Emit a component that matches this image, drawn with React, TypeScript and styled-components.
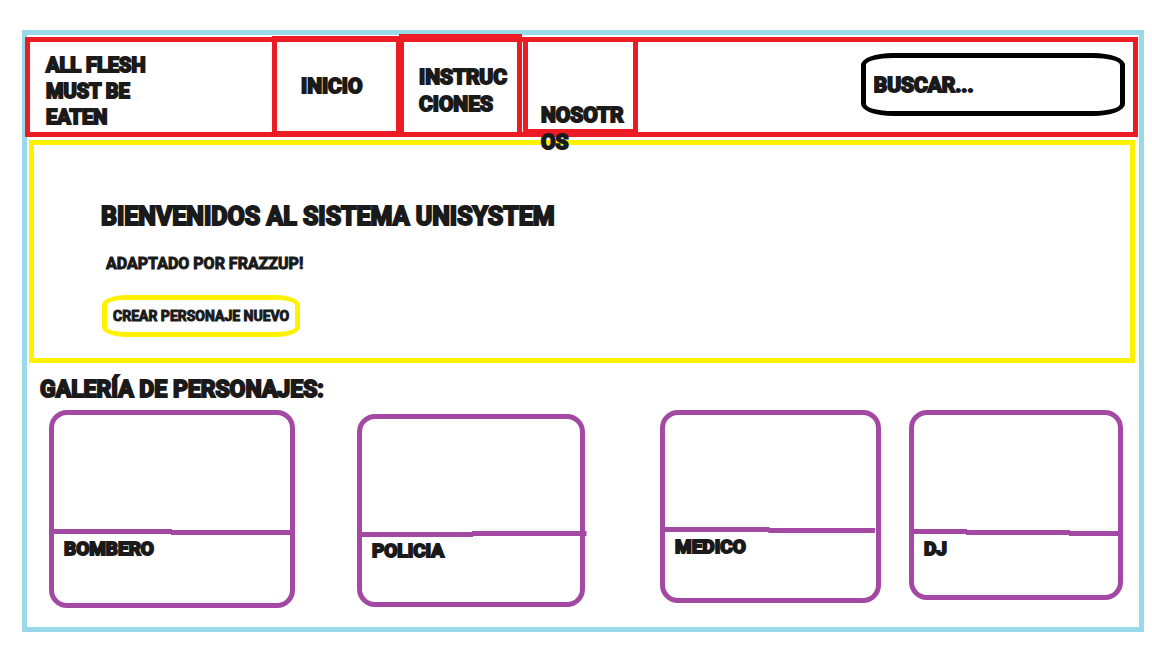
import React from "react";
import styled, { createGlobalStyle } from "styled-components";

const GlobalStyle = createGlobalStyle`
  *, *::before, *::after { box-sizing: border-box; }
  body {
    margin: 0;
    background: #fff;
    color: #1a1a1a;
    font-family: "Roboto", sans-serif;
    font-weight: 700;
    text-transform: uppercase;
    -webkit-text-stroke: 1px #1a1a1a;
  }
`;

const Frame = styled.div`
  margin: 30px 8px 16px 22px;
  border: 5px solid #99d9ea;
  padding: 2px 0 19px;
`;

const Header = styled.header`
  position: relative;
  z-index: 1;
  display: grid;
  grid-template-rows: minmax(0, 1fr);
  grid-template-columns:
    minmax(0, 242fr) minmax(0, 127fr) minmax(0, 124fr) minmax(0, 115fr)
    minmax(0, 495fr);
  height: 100px;
  margin: 0 1px 0 -2px;
  border: 5px solid #ed1c24;
  font-size: 21px;
  -webkit-text-stroke-width: 2px;
`;

const Brand = styled.a`
  padding: 10px 0 0 16px;
  font-size: 20px;
  line-height: 26px;
  color: inherit;
  text-decoration: none;
`;

const NavCell = styled.a<{ $margin: string; $padding: string }>`
  margin: ${(p) => p.$margin};
  padding: ${(p) => p.$padding};
  border: 5px solid #ed1c24;
  line-height: 27px;
  white-space: nowrap;
  color: inherit;
  text-decoration: none;
`;

const SearchForm = styled.form`
  padding: 11px 8px 0 45%;
`;

const SearchInput = styled.input`
  display: block;
  width: 100%;
  height: 63px;
  padding: 0 8px;
  border: 5px solid #000;
  border-radius: 32px / 12px;
  background: #fff;
  color: inherit;
  font: inherit;
  text-transform: inherit;
  -webkit-text-stroke: inherit;
  outline: none;

  &::placeholder {
    color: #1a1a1a;
    opacity: 1;
  }
`;

const Hero = styled.section`
  margin: 3px 4px 0 2px;
  padding: 54px 67px 21px;
  border: 5px solid #fff200;
`;

const Title = styled.h1`
  margin: 0;
  font-size: 25px;
  line-height: 36px;
  -webkit-text-stroke-width: 2px;
`;

const Subtitle = styled.p`
  margin: 17px 0 19px 5px;
  font-size: 16px;
  line-height: 24px;
`;

const CreateButton = styled.button`
  display: block;
  height: 42px;
  margin-left: 1px;
  padding: 0 6px;
  border: 5px solid #fff200;
  border-radius: 24px / 10px;
  background: #fff;
  color: inherit;
  font: inherit;
  font-size: 14px;
  text-transform: inherit;
  -webkit-text-stroke: inherit;
  white-space: nowrap;
`;

const GalleryTitle = styled.h2`
  margin: 11px 0 4px 13px;
  font-size: 23px;
  line-height: 32px;
  -webkit-text-stroke-width: 2px;
`;

const Gallery = styled.div`
  display: flex;
  align-items: flex-start;
  padding: 0 16px 0 22px;
`;

const Card = styled.article<{
  $grow: number;
  $gap: number;
  $top: number;
  $height: number;
}>`
  flex: ${(p) => p.$grow} 1 0;
  min-width: 0;
  min-height: ${(p) => p.$height}px;
  margin: ${(p) => p.$top}px 0 0 ${(p) => p.$gap}px;
  border: 5px solid #a349a4;
  border-radius: 18px;
`;

const Picture = styled.div<{ $height: number }>`
  height: ${(p) => p.$height}px;
`;

const Divider = styled.svg`
  display: block;
  width: 100%;
  height: 5px;
  overflow: visible;
  fill: #a349a4;
`;

const Name = styled.h3`
  margin: 3px 0 0 10px;
  font-size: 19px;
  line-height: 24px;
  -webkit-text-stroke-width: 2px;
`;

type Stroke = { x: number; y: number; w: number };

type Character = {
  name: string;
  grow: number;
  gap: number;
  top: number;
  height: number;
  picture: number;
  strokes: Stroke[];
};

const characters: Character[] = [
  {
    name: "Bombero", grow: 236, gap: 0, top: 0, height: 198, picture: 114,
    strokes: [{ x: 0, y: 0, w: 50 }, { x: 49.5, y: 1, w: 50.5 }],
  },
  {
    name: "Policia", grow: 218, gap: 62, top: 4, height: 193, picture: 112,
    strokes: [{ x: 0, y: 1, w: 51 }, { x: 50.5, y: 0, w: 52.5 }],
  },
  {
    name: "Medico", grow: 211, gap: 75, top: 0, height: 193, picture: 112,
    strokes: [{ x: 0, y: 0, w: 49.5 }, { x: 49, y: 1, w: 50.5 }],
  },
  {
    name: "DJ", grow: 204, gap: 28, top: 0, height: 190, picture: 114,
    strokes: [{ x: 0, y: 0, w: 26 }, { x: 25.5, y: 1, w: 51 }, { x: 76, y: 2, w: 24 }],
  },
];

export default function App() {
  return (
    <>
      <GlobalStyle />
      <Frame>
        <Header>
          <Brand href="#">
            All Flesh
            <br />
            Must Be
            <br />
            Eaten
          </Brand>
          <NavCell href="#inicio" $margin="-6px -2px -4px 0" $padding="32px 0 0 24px">
            Inicio
          </NavCell>
          <NavCell href="#instrucciones" $margin="-8px 1px -5px 0" $padding="25px 0 0 15px">
            Instruc
            <br />
            ciones
          </NavCell>
          <NavCell href="#nosotros" $margin="-5px 0 -2px 0" $padding="60px 0 0 13px">
            Nosotr
            <br />
            os
          </NavCell>
          <SearchForm role="search">
            <SearchInput type="text" aria-label="Buscar" placeholder="Buscar..." />
          </SearchForm>
        </Header>
        <main>
          <Hero>
            <Title>Bienvenidos al sistema Unisystem</Title>
            <Subtitle>Adaptado por Frazzup!</Subtitle>
            <CreateButton type="button">Crear personaje nuevo</CreateButton>
          </Hero>
          <GalleryTitle>Galería de personajes:</GalleryTitle>
          <Gallery>
            {characters.map((c) => (
              <Card key={c.name} $grow={c.grow} $gap={c.gap} $top={c.top} $height={c.height}>
                <Picture $height={c.picture} />
                <Divider aria-hidden="true">
                  {c.strokes.map((s) => (
                    <rect key={s.x} x={`${s.x}%`} y={s.y} width={`${s.w}%`} height={5} />
                  ))}
                </Divider>
                <Name>{c.name}</Name>
              </Card>
            ))}
          </Gallery>
        </main>
      </Frame>
    </>
  );
}
